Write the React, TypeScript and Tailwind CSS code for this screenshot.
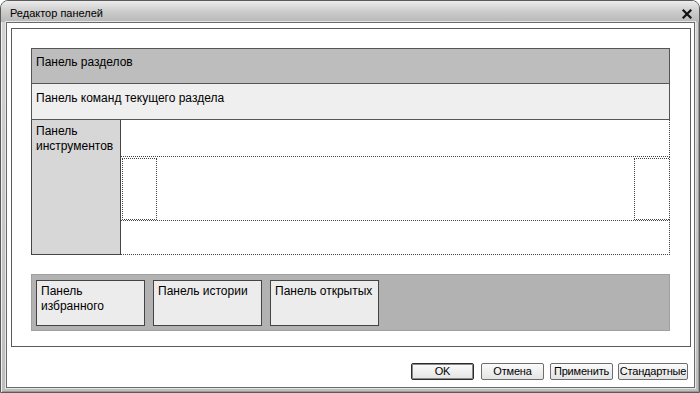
import React from "react";

const font = { fontFamily: '"Liberation Sans", Arial, sans-serif' };

function Btn({ label, w, def }: { label: string; w: string; def?: boolean }) {
  return (
    <div
      className={`${w} h-[17px] flex items-center justify-center text-[11px] tracking-[-0.2px] leading-none text-black rounded-[2px] bg-gradient-to-b from-[#fbfbfb] to-[#e4e4e4] ${
        def ? "border border-[#2a2a2a] shadow-[inset_0_0_0_1px_#8a8a8a]" : "border border-[#6e6e6e]"
      }`}
    >
      {label}
    </div>
  );
}

export default function App() {
  return (
    <div className="w-[700px] h-[393px] bg-white overflow-hidden" style={font}>
      <div className="w-[700px] h-[393px] flex flex-col border border-[#5a5a5a] rounded-t-[8px] bg-gradient-to-b from-[#d4d4d4] to-[#bebebe] shadow-[inset_1px_1px_0_#f2f2f2,inset_-1px_-1px_0_#9a9a9a]">
        {/* Title bar */}
        <div className="h-[21px] flex items-center justify-between pl-[9px] pr-[7px] rounded-t-[7px] bg-gradient-to-b from-[#ececec] via-[#cccccc] to-[#b8b8b8]">
          <span className="text-[11px] text-black leading-none pt-[3px]">Редактор панелей</span>
          <svg width="10" height="10" viewBox="0 0 10 10" className="mt-[4px]">
            <path d="M1.5 1.5 L8.5 8.5 M8.5 1.5 L1.5 8.5" stroke="#111" strokeWidth="2.2" strokeLinecap="square" />
          </svg>
        </div>
        {/* Frame */}
        <div className="flex-1 flex pl-[5px] pr-[4px] pb-[4px]">
          <div className="flex-1 flex flex-col bg-white border border-[#6a6a6a] shadow-[0_0_0_1px_#e6e6e6]">
            {/* Inner editor box */}
            <div className="ml-[4px] mr-[3px] mt-[5px] h-[319px] border border-[#5a5a5a] pt-[19px] pl-[19px] pr-[20px] flex flex-col">
              <div className="w-[639px] flex flex-col">
                <div className="h-[36px] bg-[#bdbdbd] border border-[#555] flex items-start pl-[4px] pt-[4px] text-[12px] text-black">
                  Панель разделов
                </div>
                <div className="h-[36px] bg-[#efefef] border border-t-0 border-[#555] flex items-start pl-[4px] pt-[5px] text-[12px] text-black">
                  Панель команд текущего раздела
                </div>
                <div className="h-[135px] flex">
                  <div className="w-[90px] bg-[#d7d7d7] border border-t-0 border-[#444] pl-[4px] pt-[4px] text-[12px] leading-[15px] text-black">
                    Панель
                    <br />
                    инструментов
                  </div>
                  <div className="flex-1 flex flex-col">
                    <div className="h-[37px] border border-t-0 border-l-0 border-dotted border-[#444] bg-white" />
                    <div className="h-[63px] flex border-r border-dotted border-[#444]">
                      <div className="w-[35px] ml-[1px] mt-[1px] h-[62px] border border-dotted border-[#444] bg-white" />
                      <div className="flex-1" />
                      <div className="w-[35px] mt-[1px] h-[62px] border border-r-0 border-dotted border-[#444] bg-white" />
                    </div>
                    <div className="flex-1 border-t border-b border-r border-dotted border-[#444] bg-white" />
                  </div>
                </div>
                <div className="h-[19px]" />
                <div className="h-[57px] bg-[#b2b2b2] border border-[#a0a0a0] flex items-start gap-[8px] pl-[4px] pt-[5px]">
                  <div className="w-[109px] h-[46px] bg-[#ececec] border border-[#444] pl-[4px] pt-[3px] text-[12px] leading-[15px] text-black">
                    Панель
                    <br />
                    избранного
                  </div>
                  <div className="w-[109px] h-[46px] bg-[#ececec] border border-[#444] pl-[4px] pt-[3px] text-[12px] leading-[15px] text-black">
                    Панель истории
                  </div>
                  <div className="w-[109px] h-[46px] bg-[#ececec] border border-[#444] pl-[4px] pt-[3px] text-[12px] leading-[15px] text-black">
                    Панель открытых
                  </div>
                </div>
              </div>
            </div>
            {/* Buttons */}
            <div className="flex justify-end pr-[6px] mt-[16px]">
              <Btn label="OK" w="w-[63px]" def />
              <div className="w-[7px]" />
              <Btn label="Отмена" w="w-[63px]" />
              <div className="w-[6px]" />
              <Btn label="Применить" w="w-[63px]" />
              <div className="w-[5px]" />
              <Btn label="Стандартные" w="w-[70px]" />
            </div>
          </div>
        </div>
      </div>
    </div>
  );
}
